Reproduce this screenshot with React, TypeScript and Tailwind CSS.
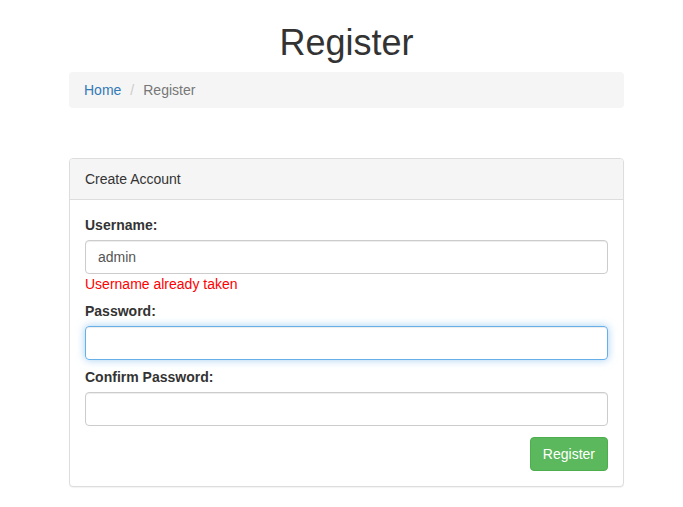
export default function App() {
  return (
    <div className="min-h-screen bg-white text-[14px] leading-[20px] text-[#333] font-['Liberation_Sans',Arial,sans-serif]">
      <div className="ml-[69px] w-[555px]">
        <h1 className="mt-[23px] mb-[9px] text-center text-[36px] leading-[40px] font-normal">Register</h1>

        <ol className="flex items-center rounded-[4px] bg-[#f5f5f5] px-[15px] py-[8px]">
          <li>
            <a href="#" className="text-[#337ab7]">Home</a>
          </li>
          <li className="ml-[4px] flex items-center text-[#777]">
            <span className="pl-[5px] pr-[9px] text-[#ccc]">/</span>
            <span>Register</span>
          </li>
        </ol>

        <div className="mt-[50px] rounded-[4px] border border-[#ddd] bg-white shadow-[0_1px_1px_rgba(0,0,0,0.05)]">
          <div className="rounded-t-[3px] border-b border-[#ddd] bg-[#f5f5f5] px-[15px] py-[10px]">
            Create Account
          </div>
          <form className="px-[15px] py-[15px]" onSubmit={(e) => e.preventDefault()}>
            <div>
              <label className="mb-[5px] block font-bold">Username:</label>
              <input
                type="text"
                defaultValue="admin"
                className="block h-[34px] w-full rounded-[4px] border border-[#ccc] px-[12px] py-[6px] text-[#555] shadow-[inset_0_1px_1px_rgba(0,0,0,0.075)] outline-none"
              />
              <div className="text-[#ff0000]">Username already taken</div>
            </div>

            <div className="mt-[7px]">
              <label className="mb-[5px] block font-bold">Password:</label>
              <input
                type="password"
                className="block h-[34px] w-full rounded-[4px] border border-[#66afe9] px-[12px] py-[6px] text-[#555] shadow-[inset_0_1px_1px_rgba(0,0,0,0.075),0_0_8px_rgba(102,175,233,0.6)] outline-none"
              />
            </div>

            <div className="mt-[7px]">
              <label className="mb-[5px] block font-bold">Confirm Password:</label>
              <input
                type="password"
                className="block h-[34px] w-full rounded-[4px] border border-[#ccc] px-[12px] py-[6px] text-[#555] shadow-[inset_0_1px_1px_rgba(0,0,0,0.075)] outline-none"
              />
            </div>

            <div className="mt-[11px] flex justify-end">
              <button
                type="submit"
                className="h-[34px] rounded-[4px] border border-[#4cae4c] bg-[#5cb85c] px-[12px] text-white"
              >
                Register
              </button>
            </div>
          </form>
        </div>
      </div>
    </div>
  );
}
